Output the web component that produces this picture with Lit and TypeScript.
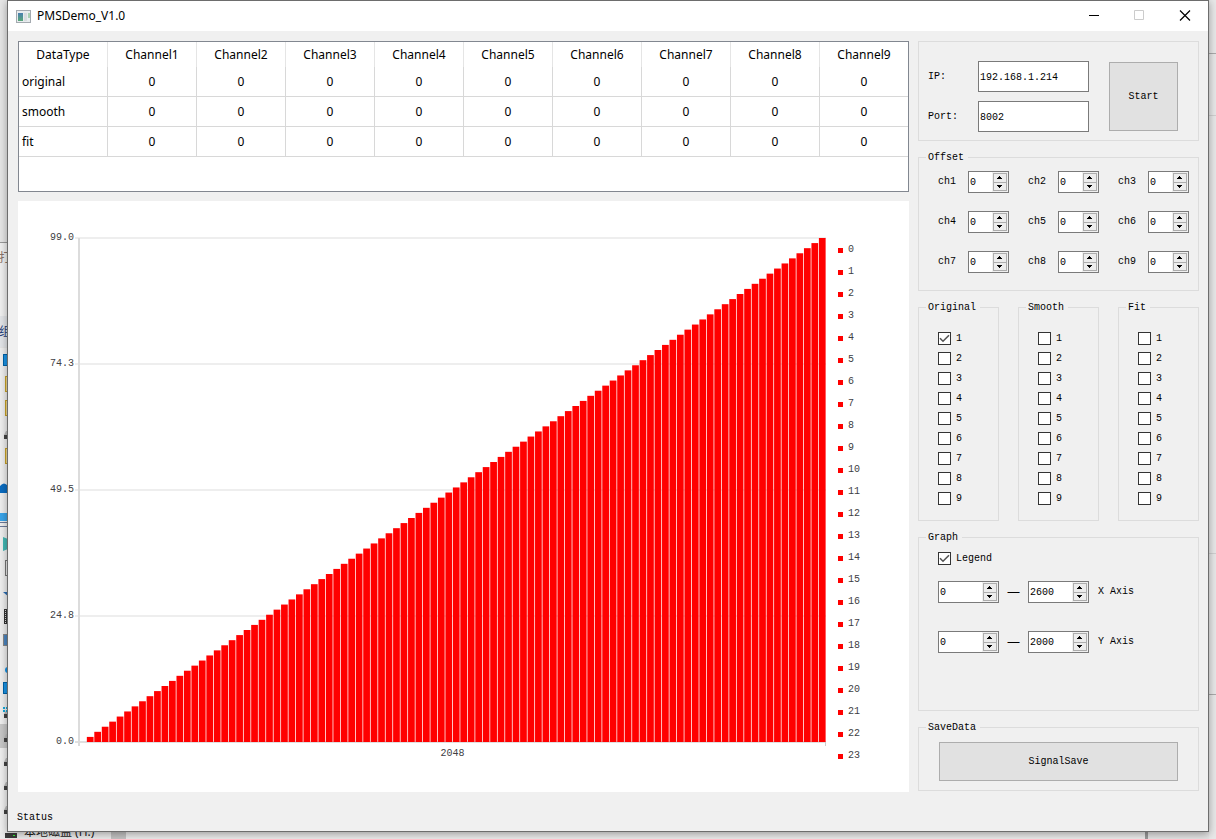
import { LitElement, html, svg, css } from "lit";
import { customElement, property, state } from "lit/decorators.js";

const base = css`
  :host, * { box-sizing: border-box; }
  button, input { font: inherit; color: inherit; margin: 0; }
`;

@customElement("spin-box")
class SpinBox extends LitElement {
  @property({ type: Number }) value = 0;
  @property() label = "";

  static styles = [base, css`
    :host { display: flex; height: 22px; border: 1px solid #7a7a7a; background: #fff; min-width: 0; }
    .field {
      flex: 1; width: 0; min-width: 0; border: 0; padding: 1px 1px 0; outline: none;
      background: transparent; appearance: textfield; -moz-appearance: textfield;
    }
    .field::-webkit-inner-spin-button { appearance: none; -webkit-appearance: none; margin: 0; }
    .steps { display: flex; flex-direction: column; width: 16px; padding: 1px; background: #f0f0f0; }
    .step {
      flex: 1; display: grid; place-items: center; padding: 0;
      border: 1px solid #adadad; background: #ececec;
    }
    .step + .step { border-top: 0; }
    .arrow { display: block; width: 6px; height: 3px; }
  `];

  private step(by: number) { this.value = Math.max(0, this.value + by); }

  render() {
    return html`
      <input class="field" type="number" aria-label=${this.label} .value=${String(this.value)}
        @change=${(e: Event) => { this.value = Number((e.target as HTMLInputElement).value); }}>
      <span class="steps">
        <button class="step" aria-label="Increase ${this.label}" @click=${() => this.step(1)}>
          <svg class="arrow" viewBox="0 0 6 3" shape-rendering="crispEdges"><path d="M2 0h1v1h1v1h1v1H0V2h1V1h1z"/></svg>
        </button>
        <button class="step" aria-label="Decrease ${this.label}" @click=${() => this.step(-1)}>
          <svg class="arrow" viewBox="0 0 6 3" shape-rendering="crispEdges"><path d="M0 0h5v1H4v1H3v1H2V2H1V1H0z"/></svg>
        </button>
      </span>`;
  }
}

@customElement("tick-box")
class TickBox extends LitElement {
  @property({ type: Boolean }) checked = false;
  @property() label = "";

  static styles = [base, css`
    :host { display: block; height: 13px; }
    .tick { display: inline-flex; align-items: center; gap: 5px; height: 13px; }
    .mark { display: grid; width: 13px; height: 13px; }
    .mark > * { grid-area: 1 / 1; width: 13px; height: 13px; }
    .caption { line-height: 15px; }
    .input { appearance: none; -webkit-appearance: none; border: 1px solid #333; background: #fff; }
    .glyph { pointer-events: none; fill: none; stroke: #555; stroke-width: 1.6; }
  `];

  render() {
    return html`
      <label class="tick">
        <span class="mark">
          <input class="input" type="checkbox" .checked=${this.checked}
            @change=${(e: Event) => { this.checked = (e.target as HTMLInputElement).checked; }}>
          ${this.checked ? html`<svg class="glyph" viewBox="0 0 13 13"><path d="M2 6.2l3 3 6-6"/></svg>` : ""}
        </span>
        <span class="caption">${this.label}</span>
      </label>`;
  }
}

@customElement("bar-chart")
class BarChart extends LitElement {
  static styles = [base, css`
    :host {
      display: grid; min-height: 0; background: #fff; color: #404044; line-height: 12px; padding-top: 31px;
      grid-template-columns: 56px minmax(0, 1fr) 78px;
      grid-template-rows: minmax(0, 1fr) 12px 32px;
      column-gap: 5px;
    }
    .scale { display: flex; flex-direction: column; justify-content: space-between; text-align: right; }
    .plot { display: block; width: 100%; height: calc(100% - 12px); margin: 6px 0; overflow: visible; min-height: 0; }
    .category { grid-column: 2; grid-row: 2; text-align: center; }
    .legend { grid-column: 3; grid-row: 1 / 4; margin: 0; padding: 7px 0 0 7px; list-style: none; }
    .entry { display: flex; align-items: center; gap: 5px; height: 22px; }
    .swatch { width: 5px; height: 5px; margin-top: 1px; background: #f00; }
  `];

  render() {
    const bars = Array.from({ length: 100 }, (_, i) => i);
    return html`
      <div class="scale">${["99.0", "74.3", "49.5", "24.8", "0.0"].map((t) => html`<span>${t}</span>`)}</div>
      <svg class="plot" viewBox="0 0 747 504" preserveAspectRatio="none" role="img" aria-label="Signal">
        ${[0, 126, 252, 378].map((y) => svg`<path d="M-4 ${y}H747" stroke="#eee" stroke-width="2"/>`)}
        <path d="M-4 504H747" stroke="#e0e0e0" stroke-width="2"/>
        <path d="M746.5 504V508" stroke="#ccc"/>
        <path d="M0 0V508" stroke="#dcdcdc" stroke-width="2"/>
        ${bars.map((i) => svg`<rect fill="#f00" x=${i * 7.47 + 0.37} y=${504 - (i * 504) / 99} width="6.72" height=${(i * 504) / 99}/>`)}
      </svg>
      <ul class="legend">
        ${bars.slice(0, 24).map((i) => html`<li class="entry"><span class="swatch"></span>${i}</li>`)}
      </ul>
      <span class="category">2048</span>`;
  }
}

@customElement("app-root")
class AppRoot extends LitElement {
  @state() private rows = ["original", "smooth", "fit"];

  static styles = [base, css`
    :host {
      display: block; position: relative; height: 100vh; min-height: 832px; overflow: hidden;
      padding: 0 7px 7px; background: #e4e4e4; color: #000;
      font: 10px/12px "Liberation Mono", monospace;
    }
    .desktop { position: absolute; inset: 0; width: 100%; height: 100%; }
    .desktop-right { position: absolute; top: 0; right: 0; width: 7px; height: 100%; }
    .desktop-foot { position: absolute; left: 0; bottom: 0; width: 100%; height: 7px; overflow: visible; }
    .behind { font: 12px "Noto Sans", "Noto Sans CJK SC", sans-serif; }
    .window {
      position: relative; height: 100%; display: flex; flex-direction: column;
      border: 1px solid #6d6d6d; background: #f0f0f0; box-shadow: 0 2px 8px rgba(0, 0, 0, 0.35);
    }
    .titlebar { display: flex; align-items: center; flex: 0 0 30px; padding-left: 8px; background: #fff; }
    .app-icon { width: 15px; height: 13px; }
    .title { flex: 1; margin: 0 0 0 6px; font: 12px/16px "Noto Sans", sans-serif; }
    .caption { width: 46px; height: 30px; border: 0; padding: 0; background: none; display: grid; place-items: center; }
    .caption svg { width: 12px; height: 12px; fill: none; stroke: #000; }
    .caption:disabled svg { stroke: #ccc; }

    .main {
      flex: 1; min-height: 0; display: grid; gap: 9px; padding: 10px 9px 0 10px;
      grid-template-columns: minmax(0, 1fr) 281px;
    }
    .left { display: grid; grid-template-rows: 151px minmax(0, 1fr); gap: 9px; min-height: 0; }
    .table-frame { border: 1px solid #828790; background: #fff; overflow: hidden; }
    .table { width: calc(100% + 1px); table-layout: fixed; border-collapse: separate; border-spacing: 0; font: 12px/16px "Noto Sans", sans-serif; }
    .table th, .table td { padding: 0 3px; text-align: center; font-weight: 400; border-right: 1px solid #d8d8d8; }
    .table thead th { height: 25px; border-right-color: #e5e5e5; }
    .table tbody th { text-align: left; }
    .table tbody th, .table tbody td { height: 30px; border-bottom: 1px solid #d8d8d8; }

    .right { display: flex; flex-direction: column; gap: 10px; padding-bottom: 1px; }
    .connect {
      display: grid; grid-template-columns: 30px minmax(0, 1fr) 69px; grid-template-rows: 31px 31px;
      gap: 9px 20px; align-items: center; padding: 19px 20px 8px 9px; border: 1px solid #dcdcdc;
    }
    .text { width: 100%; height: 31px; border: 1px solid #7a7a7a; padding: 1px 1px 0; background: #fff; }
    .push { border: 1px solid #adadad; background: #e1e1e1; padding: 1px 0 0; }
    .start { grid-column: 3; grid-row: 1 / 3; height: 69px; }
    .group { min-width: 0; margin: 0; padding: 0 7px; border: 1px solid #dcdcdc; }
    .group > legend { padding: 0 4px 0 2px; height: 13px; line-height: 13px; }
    .offsets { display: grid; grid-template-columns: repeat(3, minmax(0, 1fr)); gap: 18px 19px; padding: 7px 2px 17px 12px; }
    .offset { display: grid; grid-template-columns: 30px minmax(0, 1fr); align-items: center; }
    .trio { display: grid; grid-template-columns: repeat(3, minmax(0, 1fr)); gap: 19px; }
    .ticks { display: flex; flex-direction: column; gap: 7px; padding: 18px 0 15px 12px; }
    .graph { flex: 1; }
    .graph-body { padding: 8px 0 0 12px; }
    .axis { display: grid; grid-template-columns: 61px 29px 61px auto; align-items: center; margin-top: 16px; }
    .axis + .axis { margin-top: 28px; }
    .dash { text-align: center; font: 12px/12px "Liberation Sans", sans-serif; }
    .axis-name { padding-left: 9px; }
    .save { padding: 8px 13px 9px; }
    .save-button { display: block; width: 100%; height: 39px; }
    .status { padding: 20px 9px 7px; }
  `];

  private renderDesktop() {
    const drives = [436, 715, 739, 763, 787, 811];
    return html`
      <svg class="desktop" aria-hidden="true">
        <rect x="0" y="0" width="8" height="242" fill="#e6e6e6"/>
        <path d="M0 242.5H8" stroke="#999"/>
        <rect x="0" y="243" width="8" height="73" fill="#f0f0f0"/>
        <rect x="0" y="316" width="8" height="31" fill="#e3e5e8"/>
        <rect x="0" y="348" width="8" height="491" fill="#efefef"/>
        <rect x="0" y="724" width="8" height="24" fill="#c8c8c8"/>
        <text class="behind" x="-1" y="262" fill="#8a7468">打</text>
        <text class="behind" x="-1" y="336" fill="#1e3c78">组</text>
        ${[354, 682].map((y) => svg`<rect x="3.5" y=${y + 0.5} width="10" height="11" fill="#1a94e6" stroke="#0063a8"/>`)}
        ${[376, 400, 448].map((y) => svg`<rect x="5.5" y=${y + 0.5} width="10" height="15" fill="#f3dc8c" stroke="#c9a227"/>`)}
        ${drives.map((y) => svg`<path d="M4 ${y - 1}l2-4h4v4z" fill="#bbb"/><rect x="4" y=${y - 1} width="6" height="4" fill="#444"/>`)}
        <path d="M0 486q4-5 8 0v7H0z" fill="#0a6cc0"/>
        <rect x="0" y="513" width="8" height="8" fill="#3aa5ea"/>
        <path d="M0 522.5H8M0 526.5H8" stroke="#6a7a9a"/>
        <path d="M3 537l5 2v10l-5 2z" fill="#43b8b4"/>
        <rect x="5.500" y="560.500" width="8" height="15" fill="#eee" stroke="#777"/>
        <path d="M3 592h6v5z" fill="#2a6cb4"/>
        <rect x="4" y="609" width="6" height="15" fill="#333"/>
        <path d="M5.500 610v14" stroke="#ddd" stroke-dasharray="1 1"/>
        <rect x="3.500" y="634.500" width="8" height="11" fill="#4c86c0" stroke="#888"/>
        <circle cx="8" cy="670" r="3" fill="#1593e8"/>
        <path d="M3 707h2v2H3zM6 707h2v2H6zM3 710h2v2H3zM6 710h2v2H6z" fill="#12a8dc"/>
      </svg>
      <svg class="desktop-right" viewBox="0 0 7 839" preserveAspectRatio="none" aria-hidden="true">
        <rect width="7" height="839" fill="#e8e8e8"/>
        <path d="M0 53.500H7M0 694.500H7" stroke="#aaa"/>
        <path d="M0 115.500H7M0 553.500H7" stroke="#d0d0d0"/>
      </svg>
      <svg class="desktop-foot" aria-hidden="true">
        <rect width="1145" height="7" fill="#ececec"/>
        <rect x="111" width="15" height="7" fill="#c4c4c4"/>
        <rect x="1145" width="3" height="7" fill="#999"/>
        <rect x="5" y="1" width="12" height="5" fill="#3c3c3c"/>
        <rect x="13" y="3" width="2" height="1" fill="#3f3"/>
        <text class="behind" x="24" y="4" fill="#222">本地磁盘 (H:)</text>
      </svg>`;
  }

  private renderAxis(name: string, max: number) {
    return html`
      <div class="axis">
        <spin-box label="${name} minimum" .value=${0}></spin-box>
        <span class="dash">—</span>
        <spin-box label="${name} maximum" .value=${max}></spin-box>
        <span class="axis-name">${name}</span>
      </div>`;
  }

  render() {
    const nine = [1, 2, 3, 4, 5, 6, 7, 8, 9];
    return html`
      ${this.renderDesktop()}
      <div class="window">
        <header class="titlebar">
          <svg class="app-icon" viewBox="0 0 15 13" aria-hidden="true">
            <defs><linearGradient id="pane" x2="0" y2="1"><stop offset="0" stop-color="#4a7fb0"/><stop offset="1" stop-color="#58a878"/></linearGradient></defs>
            <rect x=".5" y=".5" width="14" height="12" fill="#e8ecee" stroke="#a4aab0"/>
            <rect x="2" y="3" width="5" height="8" fill="url(#pane)"/>
            <rect x="8" y="3" width="3" height="8" fill="#d8dcdf"/>
            <rect x="12" y="3" width="2" height="5" fill="#a8d0b4"/>
          </svg>
          <h1 class="title">PMSDemo_V1.0</h1>
          <button class="caption" aria-label="Minimize"><svg viewBox="0 0 12 12"><path d="M2 5.500H12"/></svg></button>
          <button class="caption" aria-label="Maximize" disabled><svg viewBox="0 0 12 12"><path d="M1.500 .5h9v9h-9z"/></svg></button>
          <button class="caption" aria-label="Close"><svg viewBox="0 0 12 12"><path d="M1 .5l10 10M11 .5l-10 10" stroke-width="1.200"/></svg></button>
        </header>
        <main class="main">
          <div class="left">
            <div class="table-frame">
              <table class="table">
                <thead><tr><th scope="col">DataType</th>${nine.map((n) => html`<th scope="col">Channel${n}</th>`)}</tr></thead>
                <tbody>
                  ${this.rows.map((r) => html`<tr><th scope="row">${r}</th>${nine.map(() => html`<td>0</td>`)}</tr>`)}
                </tbody>
              </table>
            </div>
            <bar-chart></bar-chart>
          </div>
          <div class="right">
            <div class="connect">
              <label for="ip">IP:</label>
              <input class="text" id="ip" type="text" value="192.168.1.214">
              <label for="port">Port:</label>
              <input class="text" id="port" type="text" value="8002">
              <button class="push start">Start</button>
            </div>
            <fieldset class="group">
              <legend>Offset</legend>
              <div class="offsets">
                ${nine.map((n) => html`<div class="offset"><span>ch${n}</span><spin-box label="ch${n}"></spin-box></div>`)}
              </div>
            </fieldset>
            <div class="trio">
              ${["Original", "Smooth", "Fit"].map((name) => html`
                <fieldset class="group">
                  <legend>${name}</legend>
                  <div class="ticks">
                    ${nine.map((n) => html`<tick-box label=${n} ?checked=${name === "Original" && n === 1}></tick-box>`)}
                  </div>
                </fieldset>`)}
            </div>
            <fieldset class="group graph">
              <legend>Graph</legend>
              <div class="graph-body">
                <tick-box label="Legend" checked></tick-box>
                ${this.renderAxis("X Axis", 2600)}
                ${this.renderAxis("Y Axis", 2000)}
              </div>
            </fieldset>
            <fieldset class="group">
              <legend>SaveData</legend>
              <div class="save"><button class="push save-button">SignalSave</button></div>
            </fieldset>
          </div>
        </main>
        <footer class="status">Status</footer>
      </div>`;
  }
}
